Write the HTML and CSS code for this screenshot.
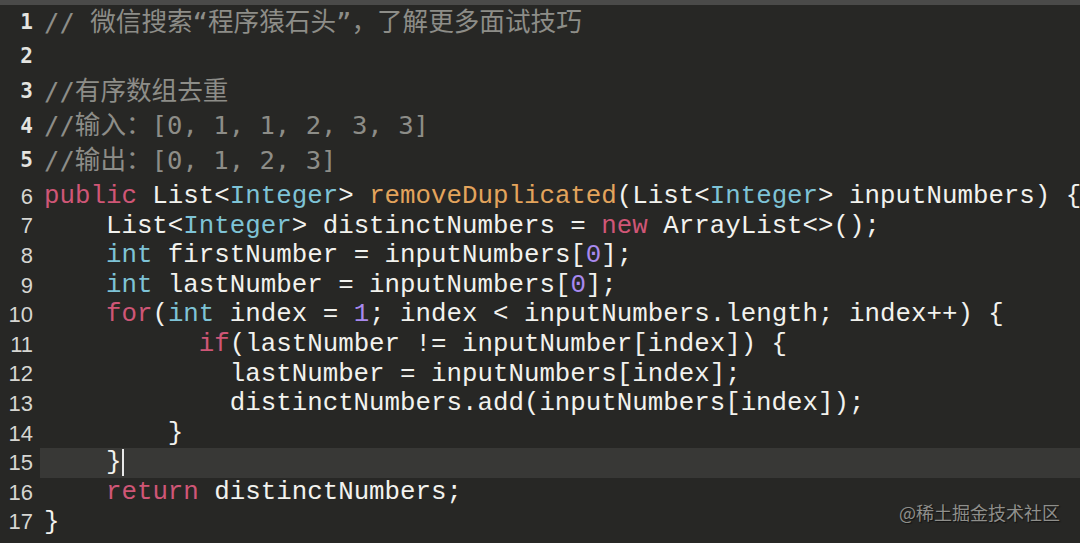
FILE: index.html
```html
<!DOCTYPE html>
<html lang="zh-CN">
<head>
<meta charset="utf-8">
<title>Code</title>
<link rel="stylesheet" href="styles.css">
</head>
<body>
<div class="topbar"></div>
<div class="editor">
  <div class="header">
    <div class="line tall"><span class="ln ln-a">1</span><span class="cm">// 微信搜索“程序猿石头”，了解更多面试技巧</span></div>
    <div class="line tall"><span class="ln ln-a">2</span><span class="cm"></span></div>
    <div class="line tall"><span class="ln ln-a">3</span><span class="cm">//有序数组去重</span></div>
    <div class="line tall"><span class="ln ln-a">4</span><span class="cm">//输入：[0, 1, 1, 2, 3, 3]</span></div>
    <div class="line tall"><span class="ln ln-a">5</span><span class="cm">//输出：[0, 1, 2, 3]</span></div>
  </div>
  <div class="code">
    <div class="line"><span class="ln">6</span><span class="src"><span class="kw">public</span> List&lt;<span class="ty">Integer</span>&gt; <span class="fn">removeDuplicated</span>(List&lt;<span class="ty">Integer</span>&gt; inputNumbers) {</span></div>
    <div class="line"><span class="ln">7</span><span class="src">    List&lt;<span class="ty">Integer</span>&gt; distinctNumbers = <span class="kw">new</span> ArrayList&lt;&gt;();</span></div>
    <div class="line"><span class="ln">8</span><span class="src">    <span class="ty">int</span> firstNumber = inputNumbers[<span class="nu">0</span>];</span></div>
    <div class="line"><span class="ln">9</span><span class="src">    <span class="ty">int</span> lastNumber = inputNumbers[<span class="nu">0</span>];</span></div>
    <div class="line"><span class="ln">10</span><span class="src">    <span class="kw">for</span>(<span class="ty">int</span> index = <span class="nu">1</span>; index &lt; inputNumbers.length; index++) {</span></div>
    <div class="line"><span class="ln">11</span><span class="src">          <span class="kw">if</span>(lastNumber != inputNumber[index]) {</span></div>
    <div class="line"><span class="ln">12</span><span class="src">            lastNumber = inputNumbers[index];</span></div>
    <div class="line"><span class="ln">13</span><span class="src">            distinctNumbers.add(inputNumbers[index]);</span></div>
    <div class="line"><span class="ln">14</span><span class="src">        }</span></div>
    <div class="line active"><span class="ln">15</span><span class="src">    }<span class="caret"></span></span></div>
    <div class="line"><span class="ln">16</span><span class="src">    <span class="kw">return</span> distinctNumbers;</span></div>
    <div class="line"><span class="ln">17</span><span class="src">}</span></div>
  </div>
</div>
<div class="watermark">@稀土掘金技术社区</div>
</body>
</html>
```

FILE: styles.css
```css
html, body {
  margin: 0;
  padding: 0;
  background: #272725;
  width: 1080px;
  height: 543px;
  overflow: hidden;
}

.topbar {
  height: 5px;
  background: #4a4a49;
}

.editor {
  display: flex;
  flex-direction: column;
  padding-top: 0;
}

.header {
  display: flex;
  flex-direction: column;
  margin-bottom: 4px;
}

.line {
  display: flex;
  align-items: center;
  height: 29.6px;
}

.line.tall {
  height: 34.6px;
}

.ln {
  width: 33px;
  flex: none;
  text-align: right;
  padding-right: 11px;
  line-height: 1;
  font-family: "Liberation Sans", Arial, sans-serif;
  font-size: 22px;
  color: #d6d6d2;
}

.ln-a {
  font-family: "DejaVu Sans Mono", monospace;
  font-weight: bold;
  font-size: 21px;
  color: #e4e4e0;
}

.cm {
  white-space: pre;
  line-height: 1;
  font-family: "DejaVu Sans Mono", "Noto Sans CJK SC", monospace;
  font-size: 25.6px;
  color: #8d8d88;
}

.src {
  display: block;
  flex: 1;
  align-self: stretch;
  white-space: pre;
  line-height: 29.6px;
  font-family: "Liberation Mono", "Courier New", monospace;
  font-size: 25.8px;
  color: #f2f2ee;
}

.line.active .src {
  background: #383836;
  margin-left: -4px;
  padding-left: 4px;
}

.caret {
  display: inline-block;
  vertical-align: middle;
  width: 2px;
  height: 27px;
  background: #e8e8e8;
  margin-left: 1px;
}

.kw { color: #cf5676; }
.ty { color: #7ec3d6; }
.fn { color: #e3a45c; }
.nu { color: #a889ee; }

.watermark {
  position: absolute;
  right: 20px;
  bottom: 18px;
  font-family: "Noto Sans CJK SC", "Noto Sans", sans-serif;
  font-size: 18px;
  color: #8f8f8b;
  text-shadow: 1px 1px 1px #111;
}
```
